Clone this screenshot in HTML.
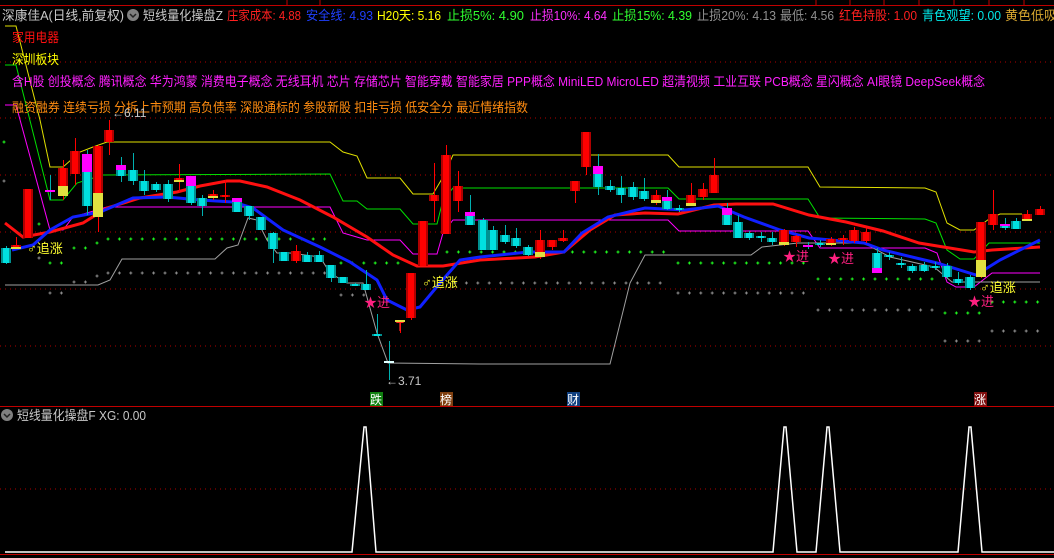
<!DOCTYPE html>
<html><head><meta charset="utf-8"><style>
html,body{margin:0;padding:0;background:#000;}
#w{position:relative;width:1054px;height:558px;overflow:hidden;background:#000;}
svg{position:absolute;left:0;top:0;}
text{font-family:"Liberation Sans","Noto Sans CJK SC",sans-serif;}
</style></head><body><div id="w">
<svg id="s" width="1054" height="558" viewBox="0 0 1054 558">
<g stroke="#b00000" stroke-width="1" stroke-dasharray="1,4">
<line x1="0" y1="62" x2="1054" y2="62"/><line x1="0" y1="118" x2="1054" y2="118"/>
<line x1="0" y1="175" x2="1054" y2="175"/><line x1="0" y1="232" x2="1054" y2="232"/>
<line x1="0" y1="289" x2="1054" y2="289"/><line x1="0" y1="346" x2="1054" y2="346"/>
<line x1="0" y1="489" x2="1054" y2="489"/>
</g>
<line x1="0" y1="5.5" x2="1054" y2="5.5" stroke="#c00000"/>
<line x1="0" y1="406.5" x2="1054" y2="406.5" stroke="#c00000"/>
<line x1="0" y1="554.5" x2="1054" y2="554.5" stroke="#c00000"/>
<g stroke="#c00000"><line x1="287" y1="0" x2="287" y2="5"/><line x1="320" y1="0" x2="320" y2="5"/><line x1="816" y1="0" x2="816" y2="5"/><line x1="850" y1="0" x2="850" y2="5"/><line x1="884" y1="0" x2="884" y2="5"/><line x1="919" y1="0" x2="919" y2="5"/><line x1="954" y1="0" x2="954" y2="5"/><line x1="989" y1="0" x2="989" y2="5"/><line x1="1024" y1="0" x2="1024" y2="5"/></g>
<g id="dots"></g>
<g fill="none" stroke-width="1">
<polyline stroke="#e0e000" points="5,26 16,26 40,120 50,167 63,167 80,152 93,147 107,142 330,142 343,152 357,156 367,178 400,178 413,194 433,194 443,177 453,155 668,155 679,167 808,167 820,187 925,188 936,192 947,223 960,230 974,230 989,219 1000,214 1022,214"/>
<polyline stroke="#00e000" points="5,65 16,65 50,200 63,200 77,183 103,175 330,174 343,201 357,201 367,209 400,209 413,224 437,224 443,200 453,188 668,188 679,199 808,199 820,218 925,219 936,223 947,250 960,259 974,259 989,243 1040,243"/>
<polyline stroke="#ff00ff" points="5,105 16,105 50,230 63,230 73,217 107,207 330,207 343,233 367,240 400,240 413,254 437,254 443,233 453,220 668,220 679,231 808,231 820,248 925,248 937,253 947,282 956,287 974,287 992,273 1040,273"/>
<polyline stroke="#a0a0a0" points="5,285 98,285 110,280 122,259 215,259 227,248 238,245 248,218 257,220 267,240 277,253 290,253 320,257 330,273 347,283 363,283 377,333 388,363 480,364 610,364 630,283 645,255 751,255 762,247 780,245 798,243 864,243 890,257 934,267 952,282 1040,282"/>
<polyline stroke="#ff1010" stroke-width="3" points="5,223 23,237 50,232 83,223 107,208 140,198 177,192 200,186 227,181 240,181 267,187 300,200 333,217 367,237 393,255 417,266 443,266 480,260 535,257 564,252 590,230 615,215 645,213 678,214 714,205 736,204 773,204 809,215 846,222 883,231 919,243 974,252 992,250 1040,247"/>
<polyline stroke="#1020ff" stroke-width="3" points="12,250 33,245 50,230 73,217 100,212 133,198 167,197 200,200 233,202 253,208 283,230 320,247 350,262 377,280 387,300 407,310 420,307 440,283 460,260 480,257 528,252 564,252 582,233 608,217 645,208 685,210 718,206 744,217 780,230 809,238 864,243 883,250 937,263 976,275 1000,260 1040,240"/>
</g>
<g id="cs"></g>
<polyline fill="none" stroke="#fff" stroke-width="1.5" points="5,552 352,552 364,427 366,427 376,552 773,552 784,427 786,427 797,552 816,552 827,427 829,427 840,552 958,552 969,427 971,427 982,552 1054,552"/>
<g font-size="13">
<text x="2" y="20" fill="#c8c8c8" textLength="122" lengthAdjust="spacingAndGlyphs">深康佳A(日线,前复权)</text>
<circle cx="133" cy="15" r="6" fill="#808080"/><path d="M130 14 l3 3 l3 -3" stroke="#222" stroke-width="1.5" fill="none"/>
<text x="143" y="20" fill="#c8c8c8" textLength="80" lengthAdjust="spacingAndGlyphs">短线量化操盘Z</text>
<text x="227" y="20" fill="#ff2020" textLength="74" lengthAdjust="spacingAndGlyphs">庄家成本: 4.88</text>
<text x="306" y="20" fill="#2040ff" textLength="67" lengthAdjust="spacingAndGlyphs">安全线: 4.93</text>
<text x="377" y="20" fill="#ffff00" textLength="64" lengthAdjust="spacingAndGlyphs">H20天: 5.16</text>
<text x="447" y="20" fill="#30ff30" textLength="77" lengthAdjust="spacingAndGlyphs">止损5%: 4.90</text>
<text x="530" y="20" fill="#ff30ff" textLength="77" lengthAdjust="spacingAndGlyphs">止损10%: 4.64</text>
<text x="612" y="20" fill="#30ff30" textLength="80" lengthAdjust="spacingAndGlyphs">止损15%: 4.39</text>
<text x="697" y="20" fill="#909090" textLength="79" lengthAdjust="spacingAndGlyphs">止损20%: 4.13</text>
<text x="780" y="20" fill="#909090" textLength="54" lengthAdjust="spacingAndGlyphs">最低: 4.56</text>
<text x="839" y="20" fill="#ff2020" textLength="78" lengthAdjust="spacingAndGlyphs">红色持股: 1.00</text>
<text x="922" y="20" fill="#00e8e8" textLength="79" lengthAdjust="spacingAndGlyphs">青色观望: 0.00</text>
<text x="1005" y="20" fill="#d8a830" textLength="52" lengthAdjust="spacingAndGlyphs">黄色低吸</text>
<text x="12" y="42" fill="#ff1010" textLength="47" lengthAdjust="spacingAndGlyphs">家用电器</text>
<text x="12" y="64" fill="#ffff00" textLength="47" lengthAdjust="spacingAndGlyphs">深圳板块</text>
<text x="12" y="86" fill="#ff20ff" textLength="973" lengthAdjust="spacingAndGlyphs">含H股 创投概念 腾讯概念 华为鸿蒙 消费电子概念 无线耳机 芯片 存储芯片 智能穿戴 智能家居 PPP概念 MiniLED MicroLED 超清视频 工业互联 PCB概念 星闪概念 AI眼镜 DeepSeek概念</text>
<text x="12" y="112" fill="#ff8c10" textLength="516" lengthAdjust="spacingAndGlyphs">融资融券 连续亏损 分拆上市预期 高负债率 深股通标的 参股新股 扣非亏损 低安全分 最近情绪指数</text>
<text x="17" y="420" fill="#c8c8c8" textLength="129" lengthAdjust="spacingAndGlyphs">短线量化操盘F XG: 0.00</text>
</g>
<circle cx="7" cy="415" r="6" fill="#808080"/><path d="M4 414 l3 3 l3 -3" stroke="#222" stroke-width="1.5" fill="none"/>
<g font-size="13" fill="#ffff30">
<text x="27" y="253">♂追涨</text><text x="422" y="287">♂追涨</text><text x="980" y="292">♂追涨</text>
</g>
<g font-size="13" fill="#ff2080">
<text x="364" y="307">★进</text><text x="783" y="261">★进</text><text x="828" y="263">★进</text><text x="968" y="306">★进</text>
</g>
<text x="396" y="331" fill="#ff2020" font-size="13">T</text>
<text x="386" y="385" fill="#c8c8c8" font-size="12">←3.71</text>
<text x="112" y="117" fill="#c8c8c8" font-size="12">←6.11</text>
<g font-size="12">
<rect x="370" y="392" width="13" height="14" fill="#108010"/><text x="370" y="404" fill="#fff">跌</text>
<rect x="440" y="392" width="13" height="14" fill="#804010"/><text x="440" y="404" fill="#fff">榜</text>
<rect x="567" y="392" width="13" height="14" fill="#104080"/><text x="567" y="404" fill="#fff">财</text>
<rect x="974" y="392" width="13" height="14" fill="#801010"/><text x="974" y="404" fill="#fff">涨</text>
</g>
</svg>
<script>
var C={r:'#ff0000',c:'#00e0e0',m:'#ff00ff',y:'#e0e040',w:'#e0ffff'};
var K=[
[6,246,264,[[248,263,'c']]],[16,237,249,[[245,247,'r'],[247,249,'y']]],[28,189,238,[[189,238,'r']]],
[50,175,200,[[190,192,'m']]],[63,160,200,[[168,186,'r'],[186,196,'y']]],[75,138,185,[[151,174,'r']]],
[87,150,215,[[154,172,'m'],[172,206,'c']]],[98,145,232,[[146,193,'r'],[193,217,'y']]],[109,120,155,[[130,142,'r']]],
[121,157,182,[[165,170,'m'],[170,176,'c']]],[133,153,185,[[170,181,'c']]],[144,170,195,[[181,191,'c']]],
[156,182,192,[[184,190,'c']]],[168,180,202,[[184,199,'c']]],[179,164,192,[[178,180,'r'],[180,182,'y']]],
[191,176,205,[[176,186,'m'],[186,203,'c']]],[202,195,216,[[198,206,'c']]],[213,190,200,[[194,196,'r'],[196,198,'y']]],
[225,180,203,[[195,197,'r']]],[237,198,212,[[198,202,'m'],[202,212,'c']]],[249,206,220,[[206,216,'c']]],
[261,217,230,[[217,230,'c']]],[273,232,263,[[233,249,'c']]],[284,252,261,[[252,261,'c']]],
[296,245,263,[[251,261,'r']]],[307,252,262,[[255,262,'c']]],[319,251,262,[[255,262,'c']]],
[331,265,282,[[265,278,'c']]],[343,277,283,[[277,283,'c']]],[355,283,286,[[284,286,'c']]],
[366,270,290,[[284,290,'c']]],[377,314,336,[[334,336,'c']]],[389,341,380,[[361,363,'w']]],
[400,321,333,[[320,322,'y']]],[411,273,320,[[273,318,'r']]],[423,221,266,[[221,266,'r']]],
[434,163,222,[[195,201,'r']]],[446,145,234,[[155,234,'r']]],[458,171,212,[[186,201,'r']]],
[470,195,225,[[212,216,'m'],[216,225,'c']]],[483,218,250,[[220,250,'c']]],[493,226,250,[[230,250,'c']]],
[505,225,244,[[235,242,'c']]],[516,228,248,[[238,246,'c']]],[528,245,256,[[247,255,'c']]],
[540,230,259,[[240,252,'r'],[252,257,'y']]],[552,240,250,[[240,247,'r']]],[563,230,242,[[238,241,'r']]],
[575,181,203,[[181,191,'r']]],[586,132,175,[[132,167,'r']]],[598,154,195,[[166,174,'m'],[174,187,'c']]],
[610,180,192,[[186,190,'c']]],[621,176,203,[[188,195,'c']]],[633,182,200,[[187,197,'c']]],
[644,178,201,[[191,199,'c']]],[656,190,205,[[195,200,'r'],[200,203,'y']]],[667,190,210,[[197,201,'m'],[201,209,'c']]],
[679,205,212,[[208,210,'c']]],[691,183,206,[[195,203,'r'],[203,206,'y']]],[703,183,200,[[189,197,'r']]],
[714,158,193,[[175,193,'r']]],[727,203,225,[[208,215,'m'],[215,225,'c']]],[738,215,238,[[222,238,'c']]],
[749,231,240,[[233,238,'c']]],[761,232,242,[[236,238,'c']]],[772,232,245,[[238,242,'c']]],
[784,229,246,[[230,242,'r'],[242,245,'y']]],[796,235,247,[[236,242,'r']]],[808,242,249,[[245,247,'m']]],
[820,240,247,[[243,245,'c']]],[831,237,246,[[239,243,'r'],[243,245,'y']]],[843,235,245,[[238,240,'r']]],
[854,227,243,[[230,241,'r']]],[866,228,243,[[232,241,'r']]],[877,248,273,[[253,268,'c'],[268,273,'m']]],
[889,252,260,[[255,257,'c']]],[901,257,268,[[263,265,'c']]],[912,264,273,[[266,271,'c']]],
[924,262,272,[[265,271,'c']]],[935,262,270,[[266,268,'c']]],[947,263,278,[[266,277,'c']]],
[958,272,285,[[279,283,'c']]],[970,275,290,[[277,288,'c']]],[981,222,278,[[222,260,'r'],[260,277,'y']]],
[993,190,230,[[214,225,'r']]],[1005,218,230,[[224,226,'m'],[226,228,'c']]],[1016,218,229,[[221,229,'c']]],
[1027,210,221,[[214,219,'r'],[219,221,'y']]],[1040,206,215,[[209,215,'r']]]
];
var s='';
K.forEach(function(k){var x=k[0],segs=k[3];var f=segs[0][2];var wc=(f=='c'||f=='m'||f=='w')?'#00b0b0':'#ff0000';
s+='<line x1="'+(x+.5)+'" y1="'+k[1]+'" x2="'+(x+.5)+'" y2="'+k[2]+'" stroke="'+wc+'"/>';
segs.forEach(function(g){var h=Math.max(1.5,g[1]-g[0]);s+='<rect x="'+(x-5)+'" y="'+g[0]+'" width="10" height="'+h+'" fill="'+C[g[2]]+'"/>';
if(g[2]=='c'||g[2]=='r'){var d=g[2]=='c'?'#009090':'#b00000';s+='<rect x="'+(x-5)+'" y="'+g[0]+'" width="2" height="'+h+'" fill="'+d+'"/><rect x="'+(x+3)+'" y="'+g[0]+'" width="2" height="'+h+'" fill="'+d+'"/>';}});});
document.getElementById('cs').innerHTML=s;
var t='';
function row(x0,x1,y,col,st){st=st||11.4;for(var x=x0;x<=x1+0.1;x+=st){t+='<path d="M'+(x-1.5)+' '+y+'h3M'+x+' '+(y-1.5)+'v3" stroke="'+col+'" stroke-width="1"/>';}}
var G='#20ff20',Y='#909090';
row(4,15,142,G);row(4,15,181,Y);row(39,39,224,G);row(39,39,258,Y);
row(50,62,263,G);row(50,62,293,Y);row(74,86,248,G);row(74,86,282,Y);row(97,97,243,G);row(97,97,276,Y);
row(108,330,239,G);row(108,330,273,Y);row(341,400,263,G);row(341,365,295,Y);
row(447,667,252,G);row(455,667,283,Y);row(678,806,263,G);row(678,806,293,Y);
row(818,934,279,G);row(818,934,310,Y);row(945,980,313,G);row(945,980,341,Y);
row(992,1040,302,G);row(992,1040,331,Y);
document.getElementById('dots').innerHTML=t;
</script>
</div></body></html>
